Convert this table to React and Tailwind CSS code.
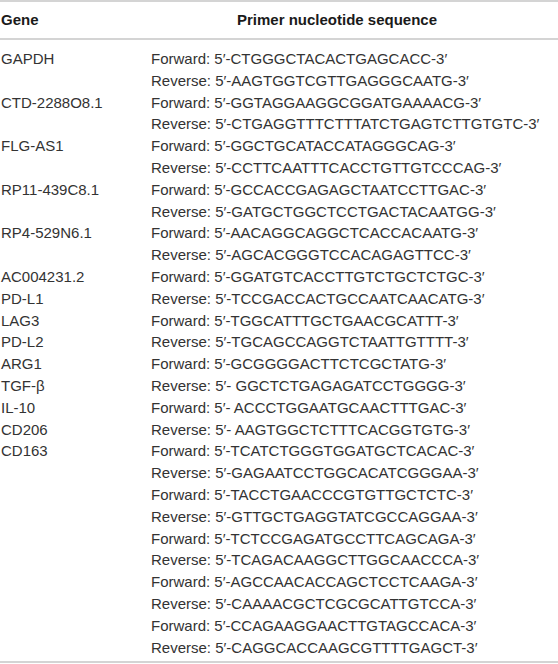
const rows = [
  ["GAPDH", "Forward: 5′-CTGGGCTACACTGAGCACC-3′"],
  ["", "Reverse: 5′-AAGTGGTCGTTGAGGGCAATG-3′"],
  ["CTD-2288O8.1", "Forward: 5′-GGTAGGAAGGCGGATGAAAACG-3′"],
  ["", "Reverse: 5′-CTGAGGTTTCTTTATCTGAGTCTTGTGTC-3′"],
  ["FLG-AS1", "Forward: 5′-GGCTGCATACCATAGGGCAG-3′"],
  ["", "Reverse: 5′-CCTTCAATTTCACCTGTTGTCCCAG-3′"],
  ["RP11-439C8.1", "Forward: 5′-GCCACCGAGAGCTAATCCTTGAC-3′"],
  ["", "Reverse: 5′-GATGCTGGCTCCTGACTACAATGG-3′"],
  ["RP4-529N6.1", "Forward: 5′-AACAGGCAGGCTCACCACAATG-3′"],
  ["", "Reverse: 5′-AGCACGGGTCCACAGAGTTCC-3′"],
  ["AC004231.2", "Forward: 5′-GGATGTCACCTTGTCTGCTCTGC-3′"],
  ["PD-L1", "Reverse: 5′-TCCGACCACTGCCAATCAACATG-3′"],
  ["LAG3", "Forward: 5′-TGGCATTTGCTGAACGCATTT-3′"],
  ["PD-L2", "Reverse: 5′-TGCAGCCAGGTCTAATTGTTTT-3′"],
  ["ARG1", "Forward: 5′-GCGGGGACTTCTCGCTATG-3′"],
  ["TGF-β", "Reverse: 5′- GGCTCTGAGAGATCCTGGGG-3′"],
  ["IL-10", "Forward: 5′- ACCCTGGAATGCAACTTTGAC-3′"],
  ["CD206", "Reverse: 5′- AAGTGGCTCTTTCACGGTGTG-3′"],
  ["CD163", "Forward: 5′-TCATCTGGGTGGATGCTCACAC-3′"],
  ["", "Reverse: 5′-GAGAATCCTGGCACATCGGGAA-3′"],
  ["", "Forward: 5′-TACCTGAACCCGTGTTGCTCTC-3′"],
  ["", "Reverse: 5′-GTTGCTGAGGTATCGCCAGGAA-3′"],
  ["", "Forward: 5′-TCTCCGAGATGCCTTCAGCAGA-3′"],
  ["", "Reverse: 5′-TCAGACAAGGCTTGGCAACCCA-3′"],
  ["", "Forward: 5′-AGCCAACACCAGCTCCTCAAGA-3′"],
  ["", "Reverse: 5′-CAAAACGCTCGCGCATTGTCCA-3′"],
  ["", "Forward: 5′-CCAGAAGGAACTTGTAGCCACA-3′"],
  ["", "Reverse: 5′-CAGGCACCAAGCGTTTTGAGCT-3′"],
];

export default function App() {
  return (
    <div
      className="w-[558px] h-[664px] bg-white text-[15px] leading-[21.8px] text-[#333]"
      style={{ fontFamily: '"Liberation Sans", Arial, sans-serif' }}
    >
      <div className="border-t-2 border-b-2 border-[#d4d4d4] pt-[7px] pb-[7.7px] grid grid-cols-[151px_1fr] font-bold text-[#1a1a1a]">
        <div className="pl-[1px]">Gene</div>
        <div className="text-center pr-[35px]">Primer nucleotide sequence</div>
      </div>
      <div className="pt-[7.6px] pb-[3px] border-b-2 border-[#d4d4d4] grid grid-cols-[151px_1fr]">
        {rows.map(([g, s], i) => (
          <div key={i} className="contents">
            <div className="pl-[1px]">{g}</div>
            <div className="whitespace-nowrap">{s}</div>
          </div>
        ))}
      </div>
    </div>
  );
}
